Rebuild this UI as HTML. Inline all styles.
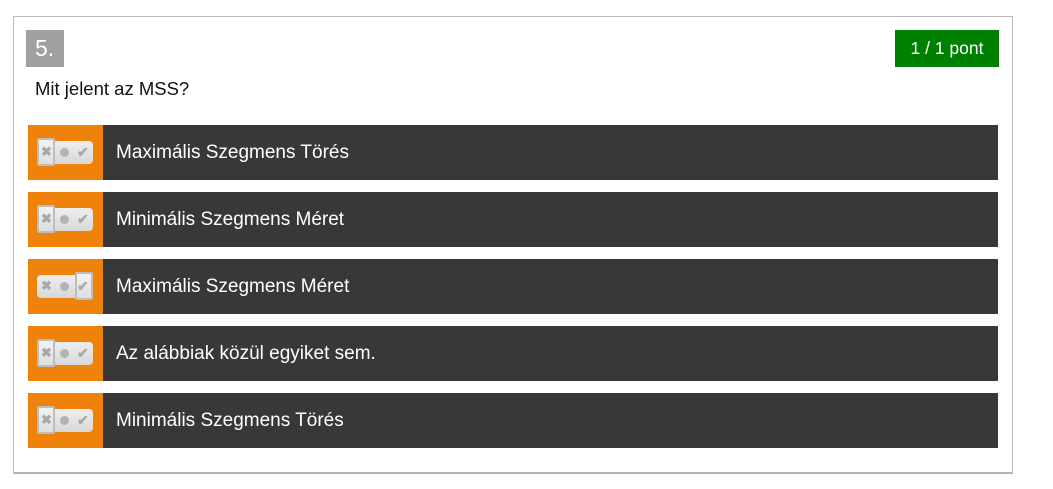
<!DOCTYPE html>
<html><head><meta charset="utf-8"><style>
*{margin:0;padding:0;box-sizing:border-box}
body{width:1053px;height:489px;background:#fff;font-family:"Liberation Sans",sans-serif;position:relative;overflow:hidden}
.box{position:absolute;left:13px;top:16px;width:1000px;height:458px;border:1px solid #bbb;border-bottom:2px solid #b5b5b5}
.num{position:absolute;left:26px;top:30px;width:38px;height:37px;background:#a0a0a0;color:#fff;font-size:23px;line-height:37px;padding-left:9px}
.pt{position:absolute;left:895px;top:30px;width:104px;height:37px;background:#008000;color:#fff;font-size:17.5px;line-height:37px;text-align:center}
.q{position:absolute;left:35px;top:78px;font-size:18.5px;color:#111}
.row{position:absolute;left:28px;width:970px;height:55px;background:#383838}
.or{position:absolute;left:0;top:0;width:75px;height:55px;background:#ef8209}
.tr{position:absolute;left:9px;top:16px;width:56px;height:23px;background:linear-gradient(#eee,#d8d8d8);border-radius:4px}
.sel{position:absolute;top:13px;width:18px;height:28px;border:2px solid #bdbdbd;background:linear-gradient(#f2f2f2,#dedede);border-radius:2px}
.x{position:absolute;left:13px;top:19px;font-size:13px;color:#a8a8a8;font-weight:bold}
.d{position:absolute;left:32px;top:23px;width:9px;height:9px;border-radius:50%;background:#b3b3b3}
.c{position:absolute;left:49px;top:19px;font-size:14px;color:#a8a8a8;font-weight:bold}
.t{position:absolute;left:88px;top:0;line-height:55px;color:#fff;font-size:19px}
</style></head><body>
<div class="box"></div>
<div class="num">5.</div>
<div class="pt">1 / 1 pont</div>
<div class="q">Mit jelent az MSS?</div>

<div class="row" style="top:125px"><div class="or"><div class="tr"></div><div class="sel" style="left:9px"></div><span class="x">✖</span><span class="d"></span><span class="c">✔</span></div><div class="t">Maximális Szegmens Törés</div></div>
<div class="row" style="top:192px"><div class="or"><div class="tr"></div><div class="sel" style="left:9px"></div><span class="x">✖</span><span class="d"></span><span class="c">✔</span></div><div class="t">Minimális Szegmens Méret</div></div>
<div class="row" style="top:259px"><div class="or"><div class="tr"></div><div class="sel" style="left:47px"></div><span class="x">✖</span><span class="d"></span><span class="c">✔</span></div><div class="t">Maximális Szegmens Méret</div></div>
<div class="row" style="top:326px"><div class="or"><div class="tr"></div><div class="sel" style="left:9px"></div><span class="x">✖</span><span class="d"></span><span class="c">✔</span></div><div class="t">Az alábbiak közül egyiket sem.</div></div>
<div class="row" style="top:393px"><div class="or"><div class="tr"></div><div class="sel" style="left:9px"></div><span class="x">✖</span><span class="d"></span><span class="c">✔</span></div><div class="t">Minimális Szegmens Törés</div></div>
</body></html>
